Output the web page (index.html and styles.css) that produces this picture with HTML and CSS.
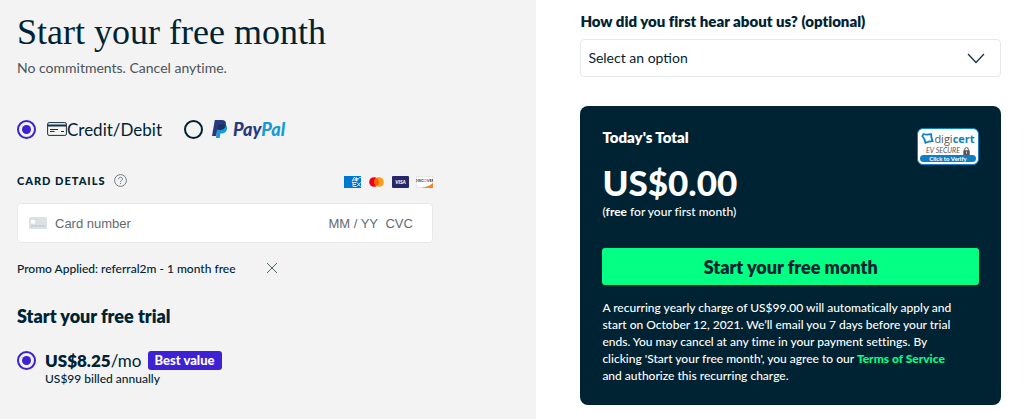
FILE: index.html
```html
<!DOCTYPE html>
<html lang="en">
  <head>
    <meta charset="utf-8">
    <meta name="viewport" content="width=device-width, initial-scale=1">
    <title>Start your free month</title>
    <link rel="stylesheet" href="styles.css">
  </head>
  <body>
    <form class="checkout">
      <div class="details">
        <h1>Start your free month</h1>
        <p class="tagline">No commitments. Cancel anytime.</p>

        <div class="methods">
          <label class="method">
            <input class="radio" type="radio" name="method" value="card" checked>
            <span class="method-name">
              <svg width="20" height="14" viewBox="0 0 20 14" fill="none" stroke="#12303f">
                <rect x="0.6" y="0.6" width="18.8" height="12.8" rx="1.5" stroke-width="1" />
                <path d="M1 3.500h18" stroke-width="2" />
                <path d="M3 7.500h8M3 9.500h4.500M14 9.500h3" stroke-width="1" />
              </svg>
              Credit/Debit
            </span>
          </label>
          <label class="method paypal-method">
            <input class="radio" type="radio" name="method" value="paypal">
            <span class="paypal">
              <svg width="16" height="18" viewBox="0 0 16 18">
                <path fill="#179bd7" d="M6 5h7.600c1.500 1 1.800 2.600 1.300 4.500-.7 2.800-2.600 3.900-5.300 3.900h-1.200l-.7 4.600H3.900z" />
                <path fill="#253b80" d="M2.800 0h6.900c3.300 0 4.700 1.700 4.200 4.600-.6 3.700-3 5.200-6.200 5.200H5.200L4.200 16H0z" />
                <path fill="#222d65" d="M6.100 5.300c.1-.6.4-.8 1-.8h4.800c.8 0 1.400.1 1.900.4-.5 3.500-2.900 4.900-6.100 4.900H5.300z" />
              </svg>
              <span class="paypal-name">Pay<span>Pal</span></span>
            </span>
          </label>
        </div>

        <div class="card-head">
          <span class="card-title">Card details</span>
          <button class="icon-btn" type="button" aria-label="Help">
            <svg width="13" height="13" viewBox="0 0 13 13" fill="none" stroke="#6d7b83">
              <circle cx="6.500" cy="6.500" r="5.900" />
              <path d="M4.600 5.200c0-2.600 3.900-2.500 3.900-.1 0 1.400-2 1.400-2 2.700" />
              <path d="M6.500 8.900v1.100" />
            </svg>
          </button>
          <div class="brands">
            <svg width="17" height="12" viewBox="0 0 17 12">
              <rect width="17" height="12" fill="#0077cf" />
              <path d="M8 5.500L10 1.500h1l1.500 3.500V1.500l1.500 2 1.500-2h1.500M9 4h3M13 3v2.500M8 6.500h4.500M9 6.500v4h3.500M9 8.500h3M13 6.500l3.500 4M16.500 6.500l-3.500 4" fill="none" stroke="#fff" stroke-width="0.800" />
            </svg>
            <svg width="17" height="12" viewBox="0 0 17 12">
              <circle cx="6" cy="6" r="4.800" fill="#eb001b" />
              <circle cx="11" cy="6" r="4.800" fill="#f79e1b" />
              <path d="M8.500 1.900a4.800 4.800 0 0 1 0 8.200 4.800 4.800 0 0 1 0-8.200z" fill="#ff5f00" />
            </svg>
            <svg width="17" height="12" viewBox="0 0 17 12">
              <rect width="17" height="12" rx="1" fill="#26276a" />
              <text class="visa" x="8.500" y="8" text-anchor="middle">VISA</text>
            </svg>
            <svg width="17" height="12" viewBox="0 0 17 12">
              <rect x="0.250" y="0.250" width="16.500" height="11.500" fill="#fff" stroke="#d5d5d5" stroke-width="0.500" />
              <path d="M17 7v5H5c5-.8 9-2.500 12-5z" fill="#f58220" />
              <text class="discover" x="8.500" y="6" text-anchor="middle">DISC<tspan>O</tspan>VER</text>
            </svg>
          </div>
        </div>

        <div class="card-field">
          <svg width="18" height="12" viewBox="0 0 18 12">
            <rect width="18" height="12" rx="1.500" fill="#dce1e6" />
            <rect x="2" y="3" width="4" height="3.500" rx="0.500" fill="#fff" />
            <path d="M2 9h14" stroke="#b5bec8" stroke-width="1.200" stroke-dasharray="3 0.700" />
          </svg>
          <input class="number" type="text" placeholder="Card number" aria-label="Card number">
          <input class="expiry" type="text" placeholder="MM / YY" aria-label="Expiry date">
          <input class="cvc" type="text" placeholder="CVC" aria-label="CVC">
        </div>

        <div class="promo">
          <span>Promo Applied: referral2m - 1 month free</span>
          <button class="icon-btn" type="button" aria-label="Remove promo">
            <svg width="12" height="12" viewBox="0 0 12 12" stroke="#4d626d">
              <path d="M1 1l10 10M11 1L1 11" />
            </svg>
          </button>
        </div>

        <h2>Start your free trial</h2>
        <label class="plan">
          <input class="radio" type="radio" name="plan" value="annual" checked>
          <span class="plan-text">
            <span class="plan-price"><span><b>US$8.25</b>/mo</span> <span class="badge">Best value</span></span>
            <span class="plan-note">US$99 billed annually</span>
          </span>
        </label>
      </div>

      <div class="summary">
        <label class="survey-label" for="survey">How did you first hear about us? (optional)</label>
        <div class="select-wrap">
          <select id="survey">
            <option>Select an option</option>
            <option>Friend or family</option>
            <option>Search engine</option>
            <option>Social media</option>
          </select>
          <svg class="chevron" width="18" height="11" viewBox="0 0 18 11" fill="none" stroke="#12303f" stroke-width="1.200">
            <path d="M1 1l8 8.500L17 1" />
          </svg>
        </div>

        <div class="total">
          <div class="total-head">
            <h3>Today's Total</h3>
            <a class="seal" href="#" aria-label="DigiCert EV secure">
              <span class="seal-name">
                <svg width="13" height="13" viewBox="0 0 13 13" fill="none" stroke="#0e7fc5" stroke-width="1.800">
                  <path d="M2.500 2c2.500 1 4.500.8 7.500.2.300 2.800.4 4.600 1.500 7-2.800 0-4.700.4-7 1.600C4.100 8.500 3.500 6.300 1.300 4z" />
                </svg>
                <span>digi<b>cert</b></span>
              </span>
              <span class="seal-ev">
                <i>EV SECURE</i>
                <svg width="7" height="8" viewBox="0 0 7 8">
                  <path d="M1.700 4V2.400a1.800 1.800 0 0 1 3.600 0V4" fill="none" stroke="#555" />
                  <rect x="0.300" y="3.300" width="6.400" height="4.700" rx="0.600" fill="#555" />
                  <path d="M3.500 4.600v2" stroke="#fff" stroke-width="0.800" />
                </svg>
              </span>
              <span class="seal-verify">Click to Verify</span>
            </a>
          </div>
          <p class="amount">US$0.00</p>
          <p class="amount-note">(<b>free</b> for your first month)</p>
          <button class="submit" type="submit">Start your free month</button>
          <p class="terms">
            A recurring yearly charge of US$99.00 will automatically apply and<br>
            start on October 12, 2021. We’ll email you 7 days before your trial<br>
            ends. You may cancel at any time in your payment settings. By<br>
            clicking 'Start your free month', you agree to our
            <a href="#">Terms of Service</a><br>
            and authorize this recurring charge.
          </p>
        </div>
      </div>
    </form>
  </body>
</html>
```
FILE: styles.css
```css
:root {
  --ink: #002333;
  --purple: #3c22d3;
  --green: #03ff84;
  --grey-bg: #f3f3f3;
  --line: #e6e8ea;
}

* {
  box-sizing: border-box;
}

body {
  margin: 0;
  font-family: Lato, "Liberation Sans", sans-serif;
  font-size: 12px;
  font-variant-ligatures: none;
  color: var(--ink);
  background-color: #fff;
}

h1,
h2,
h3,
p {
  margin: 0;
}

.checkout {
  display: grid;
  grid-template-columns: 110fr 100fr;
  min-height: 100vh;
}

.details {
  background-color: var(--grey-bg);
  padding: 11px 103px 16px 17px;
}

h1 {
  font-family: "Liberation Serif", serif;
  font-size: 36px;
  line-height: 42px;
  font-weight: normal;
}

.tagline {
  margin-top: 5px;
  font-size: 14px;
  line-height: 20px;
  color: #4a5459;
}

.methods {
  display: flex;
  gap: 22px;
  margin-top: 40px;
}

.method {
  display: flex;
  align-items: center;
  gap: 11px;
  height: 22px;
}

.method-name {
  display: flex;
  align-items: center;
  font-size: 17px;
}

.paypal-method {
  gap: 9px;
}

.radio {
  appearance: none;
  display: grid;
  place-content: center;
  flex: none;
  width: 19px;
  height: 19px;
  margin: 0;
  border: 2px solid var(--ink);
  border-radius: 50%;
}

.radio:checked {
  border-color: var(--purple);
}

.radio:checked::before {
  content: "";
  width: 9px;
  height: 9px;
  border-radius: 50%;
  background-color: var(--purple);
}

.paypal {
  display: flex;
  align-items: center;
  gap: 5px;
}

.paypal-name {
  font-size: 18px;
  font-weight: 900;
  font-style: italic;
  color: #253b80;
}

.paypal-name span {
  color: #179bd7;
}

.card-head {
  display: flex;
  align-items: center;
  gap: 8px;
  height: 16px;
  margin-top: 32px;
}

.card-title {
  font-size: 11px;
  font-weight: 900;
  letter-spacing: 1px;
  text-transform: uppercase;
}

.icon-btn {
  display: flex;
  padding: 0;
  border: none;
  background: none;
  cursor: pointer;
}

.brands {
  display: flex;
  align-self: flex-end;
  gap: 7px;
  margin-left: auto;
}

.visa {
  font-size: 5px;
  font-weight: 900;
  font-style: italic;
  fill: #fff;
}

.discover {
  font-size: 4px;
  font-weight: bold;
  fill: #333;
}

.discover tspan {
  fill: #f58220;
}

.card-field {
  display: flex;
  align-items: center;
  height: 40px;
  margin-top: 15px;
  padding: 0 11px;
  border: 1px solid var(--line);
  border-radius: 4px;
  background-color: #fff;
}

.card-field svg {
  flex: none;
}

.card-field input {
  min-width: 0;
  padding: 0;
  border: none;
  background: none;
  font-family: "Liberation Sans", sans-serif;
  font-size: 13px;
}

.card-field input::placeholder {
  color: #5f6b73;
}

.number {
  flex: 1;
  margin-left: 8px;
}

.expiry {
  width: 57px;
}

.cvc {
  width: 36px;
}

.promo {
  display: flex;
  align-items: center;
  gap: 30px;
  height: 16px;
  margin-top: 17px;
  font-weight: 500;
}

h2 {
  margin-top: 30px;
  font-size: 18px;
  line-height: 20px;
  font-weight: 800;
}

.plan {
  display: flex;
  gap: 9px;
  margin-top: 25px;
}

.plan-text {
  display: flex;
  flex-direction: column;
}

.plan-price {
  display: flex;
  align-items: center;
  gap: 6px;
  font-size: 17px;
  line-height: 19px;
}

.plan-price b {
  font-weight: 800;
}

.plan-note {
  line-height: 18px;
  font-weight: 500;
}

.badge {
  padding: 0 7px;
  border-radius: 3px;
  background-color: var(--purple);
  color: #fff;
  font-size: 13px;
  font-weight: 900;
}

.summary {
  padding: 12px 23px 14px 44px;
}

.survey-label {
  display: block;
  font-size: 15px;
  line-height: 18px;
  font-weight: 800;
}

.select-wrap {
  position: relative;
  margin-top: 9px;
}

select {
  appearance: none;
  display: block;
  width: 100%;
  height: 38px;
  padding: 0 40px 2px 7px;
  border: 1px solid var(--line);
  border-radius: 4px;
  background-color: #fff;
  color: var(--ink);
  font-family: inherit;
  font-size: 14px;
}

.chevron {
  position: absolute;
  top: 14px;
  right: 16px;
  pointer-events: none;
}

.total {
  margin-top: 29px;
  padding: 22px 22px 21px;
  border-radius: 8px;
  background-color: var(--ink);
  color: #fff;
}

.total-head {
  display: flex;
  justify-content: space-between;
}

h3 {
  font-size: 15px;
  line-height: 18px;
  font-weight: 800;
}

.seal {
  display: flex;
  flex-direction: column;
  align-items: center;
  width: 62px;
  height: 37px;
  padding: 2px;
  border: 1px solid #0e7fc5;
  border-radius: 6px;
  background-color: #fff;
  color: #555;
  text-decoration: none;
}

.seal-name {
  display: flex;
  align-items: center;
  font-family: "Open Sans", sans-serif;
  font-size: 11px;
  line-height: 15px;
}

.seal-name svg {
  flex: none;
}

.seal-name b {
  color: #0e7fc5;
}

.seal-ev {
  display: flex;
  align-items: center;
  gap: 3px;
  font-size: 7px;
  line-height: 9px;
}

.seal-verify {
  width: 100%;
  border-radius: 4px;
  background-color: #0e7fc5;
  color: #fff;
  font-size: 6px;
  line-height: 7px;
  font-weight: bold;
  text-align: center;
}

.amount {
  margin-bottom: 4px;
  font-size: 35px;
  line-height: 34px;
  font-weight: 900;
}

.amount-note {
  line-height: 18px;
  font-weight: 500;
}

.submit {
  display: block;
  width: 100%;
  height: 37px;
  margin-top: 27px;
  border: none;
  border-radius: 3px;
  background-color: var(--green);
  color: var(--ink);
  font-family: inherit;
  font-size: 18px;
  font-weight: 800;
  cursor: pointer;
}

.terms {
  margin-top: 14px;
  font-weight: 500;
  line-height: 17px;
}

.terms a {
  color: var(--green);
  font-weight: 900;
  text-decoration: none;
}
```
